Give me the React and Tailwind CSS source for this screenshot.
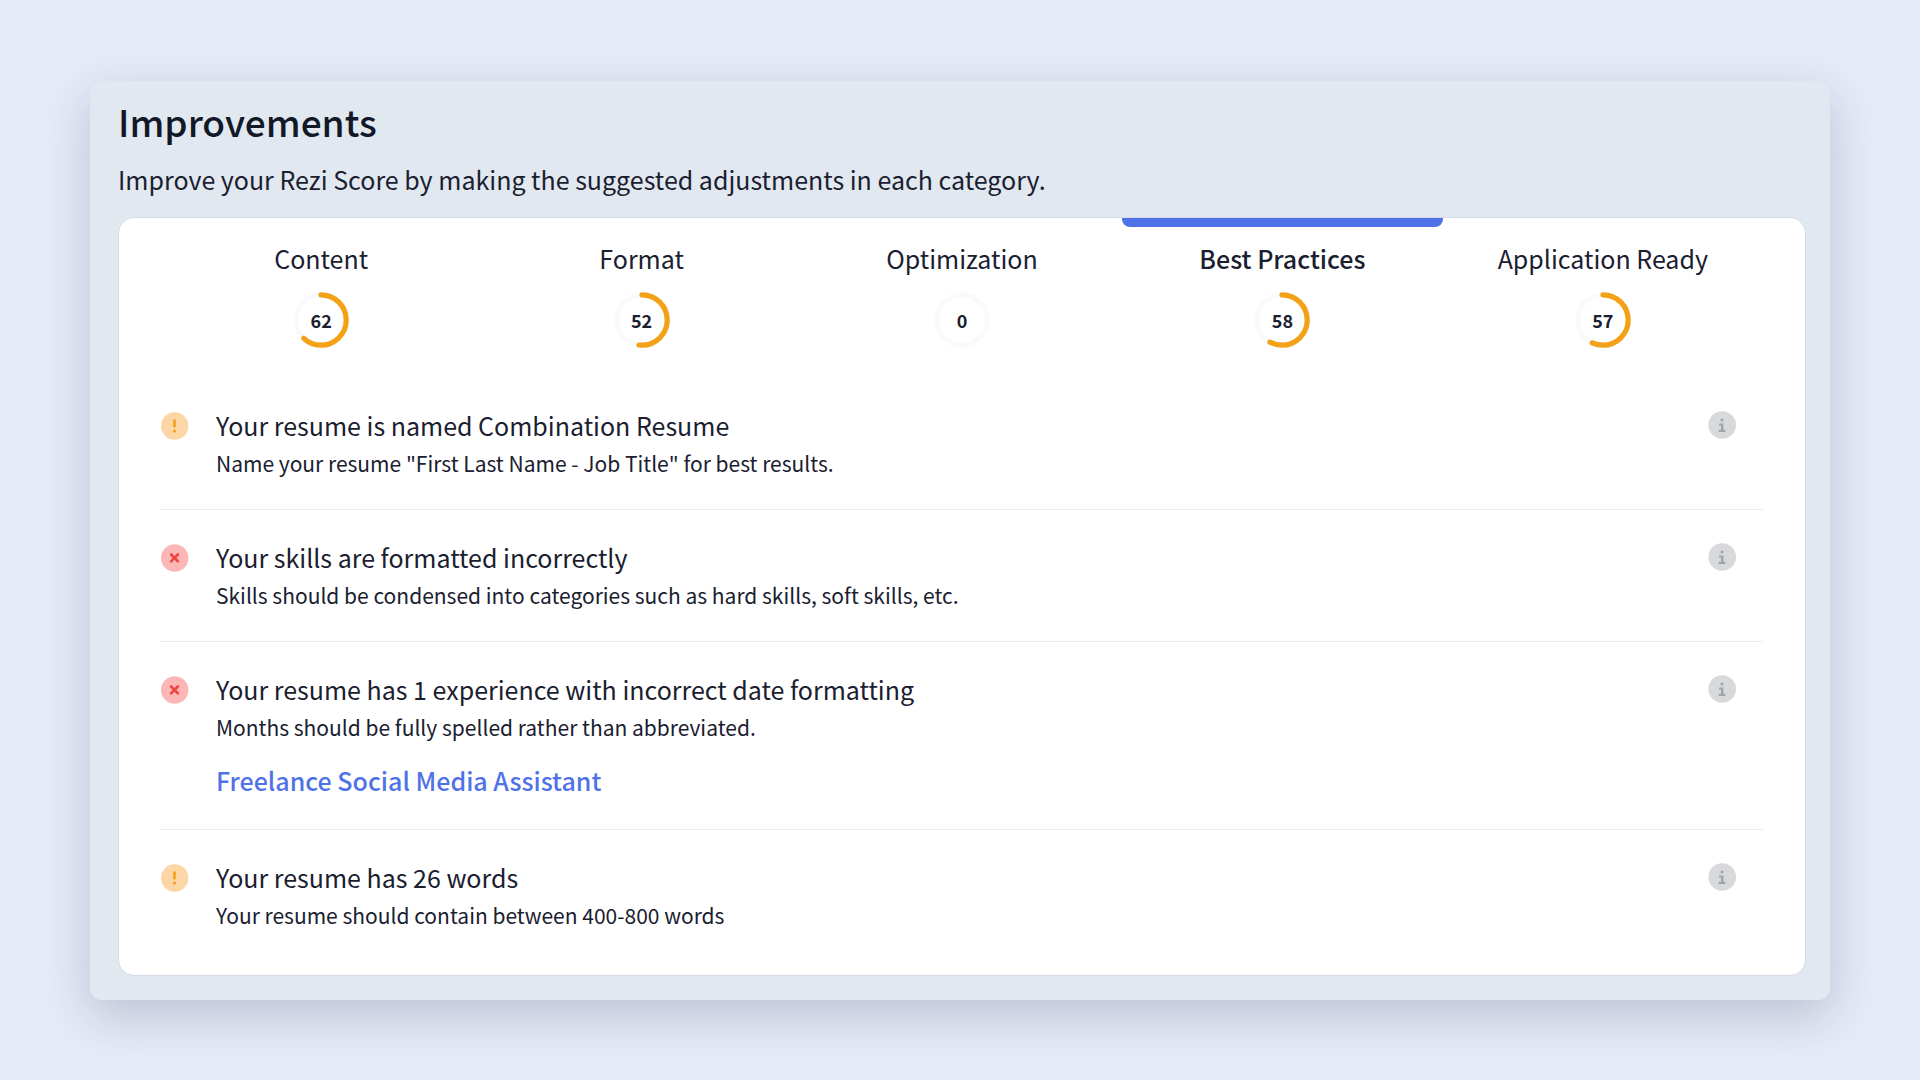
import React, { useState } from 'react';

const categories = [
  { name: 'Content', score: 62 },
  { name: 'Format', score: 52 },
  { name: 'Optimization', score: 0 },
  { name: 'Best Practices', score: 58 },
  { name: 'Application Ready', score: 57 }
];

const suggestions = [
  {
    level: 'warning',
    title: 'Your resume is named Combination Resume',
    detail: 'Name your resume "First Last Name - Job Title" for best results.'
  },
  {
    level: 'error',
    title: 'Your skills are formatted incorrectly',
    detail: 'Skills should be condensed into categories such as hard skills, soft skills, etc.'
  },
  {
    level: 'error',
    title: 'Your resume has 1 experience with incorrect date formatting',
    detail: 'Months should be fully spelled rather than abbreviated.',
    link: 'Freelance Social Media Assistant'
  },
  {
    level: 'warning',
    title: 'Your resume has 26 words',
    detail: 'Your resume should contain between 400-800 words'
  }
];

/**
 * Circular score gauge, the arc starts at 12 o'clock
 */
function ScoreRing({ score }) {
  return (
    <span className="relative flex h-14 w-14 items-center justify-center">
      <svg className="absolute inset-0 h-14 w-14 -rotate-90" viewBox="0 0 56 56" fill="none" aria-hidden="true">
        <circle cx="28" cy="28" r="25.2" stroke="#f9fafb" strokeWidth="5.2" />
        {score > 0 && (
          <circle
            cx="28"
            cy="28"
            r="25.2"
            stroke="#f3a117"
            strokeWidth="5.2"
            strokeLinecap="round"
            pathLength="100"
            strokeDasharray={`${score} 100`}
          />
        )}
      </svg>
      <span className="relative text-[18px] leading-6 font-bold">{score}</span>
    </span>
  );
}

function StatusIcon({ level }) {
  if (level === 'error') {
    return (
      <svg className="h-7 w-7 shrink-0" viewBox="0 0 28 28" fill="none" role="img" aria-label="Error">
        <circle cx="13.7" cy="14" r="13.7" fill="#fcb6b6" />
        <path d="M10.1 10.5l6.8 6.8M16.9 10.5l-6.8 6.8" stroke="#ef4444" strokeWidth="2.6" strokeLinecap="round" />
      </svg>
    );
  }

  return (
    <svg className="h-7 w-7 shrink-0" viewBox="0 0 28 28" fill="none" role="img" aria-label="Warning">
      <circle cx="13.7" cy="14" r="13.7" fill="#fcd6a4" />
      <path d="M13.5 8.6v5.6" stroke="#f3a117" strokeWidth="2.6" strokeLinecap="round" />
      <circle cx="13.5" cy="19.1" r="1.6" fill="#f3a117" />
    </svg>
  );
}

function InfoButton({ label }) {
  return (
    <button type="button" aria-label={label} className="h-7 w-7 shrink-0 rounded-full">
      <svg className="h-7 w-7" viewBox="0 0 28 28" fill="none" aria-hidden="true">
        <circle cx="14.2" cy="14" r="13.8" fill="#d8d9db" />
        <circle cx="14" cy="8.9" r="1.5" fill="#a0a3aa" />
        <path d="M11 12.4h4.4v6.4h1.9v2.1h-6.6v-2.1h2.3v-4.2H11z" fill="#a0a3aa" />
      </svg>
    </button>
  );
}

function Suggestion({ level, title, detail, link }) {
  return (
    <li className="flex items-start border-b border-[#e6ecf0] pt-7 pb-[27px] pr-[27px] last:border-b-0">
      <div className="flex h-10 items-center">
        <StatusIcon level={level} />
      </div>
      <div className="ml-[27px] min-w-0 flex-1">
        <h2 className="text-[25px] leading-[38px]">{title}</h2>
        <p className="text-[21px] leading-[38px]">{detail}</p>
        {link && (
          <a href="#experience" className="mt-3 block w-fit text-[25px] leading-11 font-medium text-[#4f72e8]">
            {link}
          </a>
        )}
      </div>
      <div className="flex h-[38px] items-center">
        <InfoButton label={`More about: ${title}`} />
      </div>
    </li>
  );
}

export default function App() {
  const [active, setActive] = useState('Best Practices');

  return (
    <main className="flex min-h-screen flex-col justify-center bg-[#e7ebf7] px-[90px] py-10 font-['Noto_Sans_CJK_SC',sans-serif] text-[#1a2030]">
      <section className="rounded-xl bg-[#e2e8f0] pt-[18px] pr-6 pb-6 pl-7 shadow-[0_16px_48px_rgba(40,40,80,0.22)]">
        <h1 className="text-[37px] leading-11 font-medium text-[#111827]">Improvements</h1>
        <p className="mt-[18px] text-[25px] leading-9">
          Improve your Rezi Score by making the suggested adjustments in each category.
        </p>

        <div className="mt-5 rounded-2xl border border-[#d3dce6] bg-white px-[42px] pb-3.5">
          {/* Category tabs */}
          <div role="tablist" className="grid grid-cols-5">
            {categories.map(({ name, score }) => (
              <button
                key={name}
                type="button"
                role="tab"
                aria-selected={active === name}
                onClick={() => setActive(name)}
                className="relative flex flex-col items-center gap-4 pt-[22px] pb-[30px]"
              >
                {active === name && (
                  <span className="absolute inset-x-0 top-0 h-[9px] rounded-b-lg bg-[#4f72e8]" />
                )}
                <span className={active === name ? 'text-[25px] leading-9 font-medium' : 'text-[25px] leading-9'}>
                  {name}
                </span>
                <ScoreRing score={score} />
              </button>
            ))}
          </div>

          <ul>
            {suggestions.map((item) => (
              <Suggestion key={item.title} {...item} />
            ))}
          </ul>
        </div>
      </section>
    </main>
  );
}
